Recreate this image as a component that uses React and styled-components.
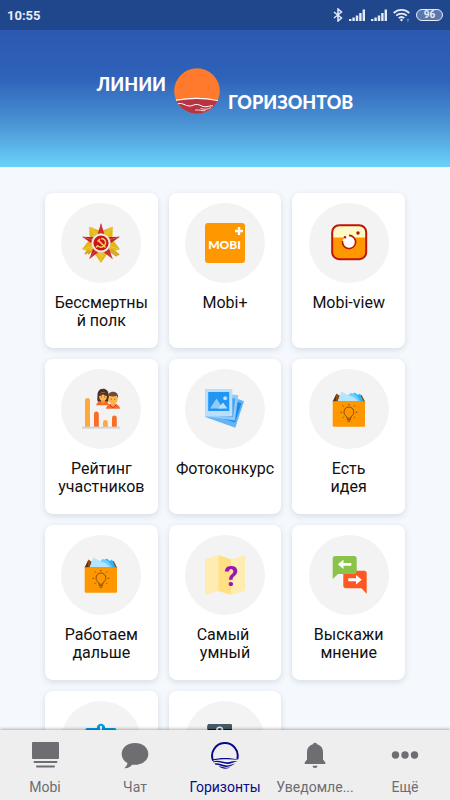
import { useState } from "react";
import styled, { createGlobalStyle } from "styled-components";

const GlobalStyle = createGlobalStyle`
  * {
    box-sizing: border-box;
  }
  body {
    margin: 0;
    font-family: Roboto, "Noto Sans", sans-serif;
    background: #f5f9fd;
  }
  button {
    font: inherit;
    border: 0;
    padding: 0;
    cursor: pointer;
  }
`;

const Screen = styled.div`
  display: flex;
  flex-direction: column;
  height: 100vh;
`;

const StatusBar = styled.div`
  display: flex;
  align-items: center;
  justify-content: space-between;
  flex-shrink: 0;
  height: 30px;
  padding: 0 7px;
  background: #20468b;
  color: #e6ecf7;
`;

const Clock = styled.time`
  font-size: 13px;
  font-weight: 700;
`;

const StatusIcons = styled.div`
  display: flex;
  align-items: center;
  gap: 6px;

  svg {
    display: block;
  }
`;

const Battery = styled.span`
  width: 27px;
  height: 12px;
  border: 1px solid #e6ecf7;
  border-radius: 6px;
  background: #5b78ac;
  font-size: 10px;
  font-weight: 700;
  line-height: 10px;
  text-align: center;
`;

const Header = styled.header`
  display: flex;
  justify-content: center;
  flex-shrink: 0;
  height: 137px;
  padding-top: 38px;
  background: linear-gradient(#2c58b0, #2f62b9 35%, #4a93d4 68%, #6ad2fa);
`;

const Logo = styled.h1`
  display: flex;
  gap: 8px;
  height: 46px;
  margin: 0;
  color: #fff;
  font-family: Lato, Inter, sans-serif;
  font-size: 18px;
  font-weight: 900;
`;

const LogoWord = styled.span`
  align-self: ${(props) => (props.$low ? "flex-end" : "flex-start")};
  line-height: ${(props) => (props.$low ? "24px" : "32px")};
`;

const Content = styled.main`
  flex: 1;
  min-height: 0;
  overflow: hidden;
  padding: 26px 10% 0;
`;

const Grid = styled.div`
  display: grid;
  grid-template-columns: repeat(3, 1fr);
  grid-auto-rows: 155px;
  gap: 11px;
`;

const Card = styled.button`
  display: flex;
  flex-direction: column;
  align-items: center;
  gap: 11px;
  min-width: 0;
  && {
    padding: 10px 6px;
  }
  border-radius: 8px;
  background: #fff;
  color: #111;
  box-shadow: 0 2px 6px rgba(50, 70, 110, 0.16);
`;

const IconCircle = styled.span`
  display: flex;
  align-items: center;
  justify-content: center;
  flex-shrink: 0;
  width: 80px;
  height: 80px;
  border-radius: 50%;
  background: #f3f3f3;
`;

const CardTitle = styled.span`
  width: 100%;
  font-size: 16px;
  line-height: 18px;
  text-align: center;
  white-space: pre-line;
  word-break: break-all;
`;

const TabBar = styled.nav`
  position: relative;
  display: flex;
  flex-shrink: 0;
  height: 70px;
  background: #eee;
  box-shadow: 0 -1px 3px rgba(0, 0, 0, 0.3);
`;

const Tab = styled.button`
  display: flex;
  flex: 1;
  flex-direction: column;
  align-items: center;
  gap: 10px;
  min-width: 0;
  && {
    padding-top: 11px;
  }
  background: none;
  color: ${(props) => (props.$active ? "#0a0a8c" : "#6d6d72")};
  font-size: 14px;
  line-height: 16px;
  white-space: nowrap;
`;

const starPoints = (outer, inner, turn) =>
  Array.from({ length: 10 }, (_, i) => {
    const r = i % 2 ? inner : outer;
    const a = ((i * 36 + turn - 90) * Math.PI) / 180;
    return `${(20 + r * Math.cos(a)).toFixed(1)},${(20 + r * Math.sin(a)).toFixed(1)}`;
  }).join(" ");

const Art = ({ children }) => (
  <svg width="40" height="40" viewBox="0 0 40 40" overflow="visible" aria-hidden="true">
    {children}
  </svg>
);

const OrderIcon = () => (
  <Art>
    <polygon points={starPoints(20, 12, 36)} fill="#e3b71c" />
    <path
      d="M9 5L16 15M31 5L24 15M11 4L17 14M29 4L23 14M20 38V28M18 34L19 28M22 34L21 28M3 26L12 23M37 26L28 23M4 28L12 25M36 28L28 25"
      stroke="#f0d040"
      strokeWidth=".8"
    />
    <path d="M8 27L4 31M10 28L7 31M30 26L38 32M29 28L36 33" stroke="#d8a21e" strokeWidth="2" />
    <polygon points={starPoints(20, 7, 0)} fill="#c62128" />
    <path d="M20 1V12M2 14L12 17M38 14L28 17M9 35L15 27M31 35L25 27" stroke="#e0555a" strokeWidth=".8" />
    <circle cx="20" cy="20" r="9.5" fill="#f4eee2" stroke="#cfc7b8" strokeWidth=".5" />
    <circle cx="20" cy="20" r="7.6" fill="#c9141c" />
    <path d="M20 15.5C25 15.5 26 21 22.5 23.4C20.5 24.7 18 24 16.5 22.8L15 24.5" fill="none" stroke="#f3cf58" strokeWidth="1.4" />
    <path d="M16.5 18.5L19 16M17.6 17.6L24.5 24.5" stroke="#f3cf58" strokeWidth="1.5" />
  </Art>
);

const MobiPlusIcon = () => (
  <Art>
    <rect width="40" height="40" rx="3" fill="#ff9800" />
    <text x="19.5" y="25.5" textAnchor="middle" fill="#fff" fontFamily="Lato, Inter, sans-serif" fontSize="12" fontWeight="900">
      MOBI
    </text>
    <path d="M34 4V12M30 8H38" stroke="#fff" strokeWidth="2.4" />
  </Art>
);

const CameraIcon = () => (
  <Art>
    <rect x="3.2" y="2.2" width="34" height="34" rx="7" fill="#ff9800" />
    <path d="M3.2 14.5V9.2A7 7 0 0 1 10.2 2.2H30.2A7 7 0 0 1 37.2 9.2V14.5Z" fill="#fff9c4" />
    <rect x="3.2" y="2.2" width="34" height="34" rx="7" fill="none" stroke="#bf1408" strokeWidth="2" />
    <circle cx="20" cy="19" r="6.2" fill="#fff" />
    <path d="M20 12.4A6.6 6.6 0 1 1 13.5 18" fill="none" stroke="#bf1408" strokeWidth="1.6" />
    <circle cx="16" cy="14.2" r="1.2" fill="#bf1408" />
    <circle cx="29" cy="10" r="1.7" fill="#a3150c" />
  </Art>
);

const RatingIcon = () => (
  <Art>
    <path d="M4 38V11.5a2.5 2.5 0 0 1 5 0V38Z" fill="#ffa93a" />
    <path d="M13 38V25a2.4 2.4 0 0 1 4.8 0V38Z" fill="#f96d25" />
    <path d="M22 38V33.4a2.4 2.4 0 0 1 4.8 0V38Z" fill="#ffa93a" />
    <path d="M31 38V29a2.4 2.4 0 0 1 4.8 0V38Z" fill="#f96d25" />
    <rect x="1" y="37.6" width="38" height="2" fill="#cfd4d8" />
    <path d="M22 -.3C18 -.3 16.3 3 16.5 7C16.5 9 15.8 10.5 17 12.7H27C28.5 10 27.7 8 27.7 6C27.5 2 25.5 -.3 22 -.3Z" fill="#4b302a" />
    <path d="M15.3 16.3C15.3 13.5 18 12.2 22 12.2S28 13.5 28 16.3Z" fill="#fb6726" />
    <path d="M20 10H24V13L22 15L20 13Z" fill="#e89632" />
    <ellipse cx="22" cy="7.5" rx="3.8" ry="4.3" fill="#ffb74d" />
    <path d="M18 7C18 4.5 20 3 23 3.5C25 3.5 26 5 26 7C24 6.8 22.7 5.7 22 4.9C21 6.3 19.5 7 18 7Z" fill="#4b302a" />
    <path d="M20.2 8H21M23.2 8H24" stroke="#784719" />
    <path d="M25 19.8C25.3 16.7 28 15 32 15S38.8 16.7 39 19.8Z" fill="#fb6726" />
    <path d="M28.5 15.5L32 18.5L35.5 15.5" fill="#ffb74d" stroke="#c62828" strokeWidth="1" />
    <ellipse cx="32" cy="10.2" rx="4.6" ry="5.2" fill="#ffb74d" />
    <path d="M27 9.5C26.3 5 28.5 2.7 32 2.7S37.7 5 37 9.5L35.6 6.8C33 7.7 30 7.5 28.6 6.8Z" fill="#6d4c3b" />
    <path d="M29.8 10.2H30.7M33.3 10.2H34.2" stroke="#784719" />
  </Art>
);

const PhotosIcon = () => (
  <Art>
    <path d="M33 10L39 12.3L30.3 38.8L.3 28V20Z" fill="#64b5f6" />
    <path d="M33.5 13L36.5 14.2L30 33.5L16 29Z" fill="#1e88e5" />
    <path d="M27 5.5L33.3 6.3L30 31.5L.3 27.5V20Z" fill="#90caf9" />
    <path d="M27 9L30.3 9.4L28 28L14 27Z" fill="#42a5f5" />
    <path d="M0 0H27.3V27.3H0Z" fill="#bbdefb" />
    <rect x="3.2" y="3" width="21" height="19" fill="#2196f3" />
    <path d="M5 19.5L11.5 9.5L18 19.5Z" fill="#90caf9" />
    <path d="M13 19.5L18 13.5L22.5 19.5Z" fill="#bbdefb" />
    <circle cx="20.2" cy="9.2" r="2" fill="#bbdefb" />
  </Art>
);

const IdeaBoxIcon = () => (
  <Art>
    <path d="M3.7 13L7.5 4.5L11 7L8.5 13Z" fill="#8d4a12" />
    <path d="M36.3 13L32.7 6L28 7V13Z" fill="#8d4a12" />
    <path d="M3.7 12.5L7 6V12.5Z" fill="#5d3213" />
    <path d="M22 7L25.5 3.5L29 6L31 4.5L34.5 13H22Z" fill="#29b6f6" />
    <path d="M17 8L22 3.8L27 6L32 13H18Z" fill="#6fcffa" />
    <path d="M8.5 13L12.3 2.5L20 6.5L24.5 8L30 13Z" fill="#b3e5fc" />
    <rect x="3.7" y="12.5" width="32.3" height="25.3" rx="1" fill="#ff9800" />
    <path d="M3.7 12.5H36" stroke="#e58a0c" strokeWidth=".7" />
    <g fill="none" stroke="#854b0b" strokeWidth="1">
      <path d="M17.8 29.2V27.6C16 26.5 15 25 15 22.9A4.9 4.9 0 0 1 24.8 22.9C24.8 25 23.8 26.5 22 27.6V29.2Z" />
      <path d="M17.8 30.7H22M18.5 32.2H21.3M19.9 14.8V16.5M13.2 23.3H11.5M28.3 23.3H26.6M14.8 17.6L13.6 16.4M25 17.6L26.2 16.4M14.8 27.7L13.6 28.9M25 27.7L26.2 28.9" />
    </g>
  </Art>
);

const QuizMapIcon = () => (
  <Art>
    <path d="M0 4L13.3 0V36L0 40Z" fill="#ffecb3" />
    <path d="M13.3 0L26.4 4.2V40L13.3 36Z" fill="#ffe082" />
    <path d="M26.4 4.2L40 0V35.8L26.4 40Z" fill="#ffecb3" />
    <text x="26.3" y="31" textAnchor="middle" fill="#9c15b0" fontFamily="Roboto, sans-serif" fontSize="28" fontWeight="700">
      ?
    </text>
  </Art>
);

const OpinionIcon = () => (
  <Art>
    <path d="M17 15.7H35A2.7 2.7 0 0 1 37.7 18.4V38.7L32.3 33.3H17A2.7 2.7 0 0 1 14.3 30.6V18.4A2.7 2.7 0 0 1 17 15.7Z" fill="#ff5722" />
    <path d="M6.4 1H25A2.7 2.7 0 0 1 27.7 3.7V16.3A2.7 2.7 0 0 1 25 19H9L3.7 24V3.7A2.7 2.7 0 0 1 6.4 1Z" fill="#8bc34a" />
    <path d="M8.7 9.3L14.5 4.8V8H22.3V10.8H14.5V14Z" fill="#fff" />
    <path d="M32.7 24.8L27 20V23.2H19.3V26.2H27V29.5Z" fill="#fff" />
  </Art>
);

const BadgeIcon = () => (
  <Art>
    <rect x="4.3" y="7" width="31" height="30" rx="2" fill="#039be5" />
    <circle cx="20" cy="7" r="4.2" fill="#039be5" />
    <path d="M20 5V9" stroke="#e1f5fe" strokeWidth="2" />
  </Art>
);

const ClipboardIcon = () => (
  <Art>
    <rect x="2.5" y="3" width="24.5" height="34" rx="2" fill="#101820" />
    <path d="M2.5 8V5A2 2 0 0 1 4.5 3H25A2 2 0 0 1 27 5V8Z" fill="#455a64" />
    <circle cx="14.7" cy="9" r="2.8" fill="#37474f" stroke="#eceff1" strokeWidth="1.6" />
  </Art>
);

const TabIcon = ({ children }) => (
  <svg width="30" height="28" viewBox="0 0 30 28" fill="currentColor" aria-hidden="true">
    {children}
  </svg>
);

const cards = [
  { title: "Бессмертный полк", Icon: OrderIcon },
  { title: "Mobi+", Icon: MobiPlusIcon },
  { title: "Mobi-view", Icon: CameraIcon },
  { title: "Рейтинг\nучастников", Icon: RatingIcon },
  { title: "Фотоконкурс", Icon: PhotosIcon },
  { title: "Есть\nидея", Icon: IdeaBoxIcon },
  { title: "Работаем\nдальше", Icon: IdeaBoxIcon },
  { title: "Самый\u00a0\nумный", Icon: QuizMapIcon },
  { title: "Выскажи\nмнение", Icon: OpinionIcon },
  { title: "", Icon: BadgeIcon },
  { title: "", Icon: ClipboardIcon },
];

const tabs = [
  {
    label: "Mobi",
    icon: (
      <>
        <rect x="2" y="1" width="27" height="17" rx="1" />
        <rect x="3.5" y="20" width="24" height="2" rx="1" />
        <rect x="6" y="24.5" width="19" height="2" rx="1" />
      </>
    ),
  },
  {
    label: "Чат",
    icon: <path d="M15 2C7.5 2 1.7 6.5 1.7 13C1.7 17 3.8 20.3 7.5 22C7.2 24 6.2 25.5 4.2 27.2C8 27.3 10.5 26 12 23.7C21 24.8 28.3 20 28.3 13C28.3 6.5 22.5 2 15 2Z" />,
  },
  {
    label: "Горизонты",
    icon: (
      <>
        <path d="M3 19.5A12.8 12.8 0 1 1 27.3 18" fill="none" stroke="currentColor" strokeWidth="2" />
        <path d="M2 18.7C9 16.7 20 16.3 29 19C20 17.9 10 18 2 19.8Z" />
        <path d="M3 20.5C9 18.5 13 21.5 18 21.2C21 21 23 19.3 27.5 20.2C24 20.5 22 22.8 18 22.9C13 23 9 20 3 21.5Z" />
        <path d="M4.5 22.5C9 21.7 12 24.5 17 24.6C20 24.6 22 23 25.5 22.6C22.5 24 20.5 26 16 25.9C11.5 25.8 9 23.4 5.5 23.7Z" />
        <path d="M8.5 25.3C12 25.5 15 27.5 20.5 26.3C17 28.4 12 28 8.5 25.3Z" />
      </>
    ),
  },
  {
    label: "Уведомле...",
    icon: (
      <>
        <path d="M13 3.3A2.1 2.1 0 0 1 17 3.3C21 4.3 23 7.5 23 11.5V18.5L25.3 21.5V23H4.7V21.5L7 18.5V11.5C7 7.5 9 4.3 13 3.3Z" />
        <path d="M12.5 24.7H17.5A2.5 2.2 0 0 1 12.5 24.7Z" />
      </>
    ),
  },
  {
    label: "Ещё",
    icon: (
      <>
        <circle cx="5.5" cy="14" r="3.7" />
        <circle cx="15" cy="14" r="3.7" />
        <circle cx="24.5" cy="14" r="3.7" />
      </>
    ),
  },
];

const SignalIcon = () => (
  <svg width="16" height="14" viewBox="0 0 16 14" fill="#e6ecf7">
    <path d="M0 11h2.4v2H0zM3.4 9.5h2.4V13H3.4zM6.8 7.5h2.4V13H6.8zM10.2 5h2.4v8h-2.4zM13.6 1.5H16V13h-2.4z" />
  </svg>
);

const App = () => {
  const [active, setActive] = useState("Горизонты");

  return (
    <>
      <GlobalStyle />
      <Screen>
        <StatusBar>
          <Clock>10:55</Clock>
          <StatusIcons>
            <svg width="10" height="14" viewBox="0 0 10 14" fill="none" stroke="#e6ecf7" strokeWidth="1.5">
              <path d="M1 4L8.5 10L5 13V1L8.5 4L1 10" />
            </svg>
            <SignalIcon />
            <SignalIcon />
            <svg width="17" height="14" viewBox="0 0 17 14" fill="none" stroke="#e6ecf7" strokeWidth="1.8">
              <path d="M.7 5C5 .7 12 .7 16.3 5M3.2 7.7C6.2 4.8 10.8 4.8 13.8 7.7M5.7 10.2C7.4 8.7 9.6 8.7 11.3 10.2" />
              <circle cx="8.5" cy="12" r="1.2" fill="#e6ecf7" stroke="none" />
              <path d="M14 11.5H16M14 13H15.5" strokeWidth="1" opacity=".5" />
            </svg>
            <Battery>96</Battery>
          </StatusIcons>
        </StatusBar>

        <Header>
          <Logo>
            <LogoWord>ЛИНИИ</LogoWord>
            <svg width="46" height="46" viewBox="0 0 46 46" aria-hidden="true">
              <circle cx="23" cy="23" r="22.8" fill="#ff7a2d" />
              <path d="M2.2 32.2C15 30 31 30 43.8 32.2A22.8 22.8 0 0 1 2.2 32.2Z" fill="#b93443" />
              <g fill="none" stroke="#fff" strokeLinecap="round">
                <path d="M2.5 32.2C15 30 31 30 43.5 32.5" strokeWidth="1.2" />
                <path d="M4.5 35.5C9 34.5 11 38 15.5 38C19 38 20 36 23.5 36.5C27 37 29 39.5 33 38.7C35 38.3 37 37.5 38.5 37.7" strokeWidth="1" />
                <path d="M21.5 42C26 41.5 28 43.2 31 42.7M27 40.5C31 42 34 41.5 37 39.5" strokeWidth=".8" />
              </g>
            </svg>
            <LogoWord $low>ГОРИЗОНТОВ</LogoWord>
          </Logo>
        </Header>

        <Content>
          <Grid>
            {cards.map(({ title, Icon }, i) => (
              <Card key={i} type="button">
                <IconCircle>
                  <Icon />
                </IconCircle>
                <CardTitle>{title}</CardTitle>
              </Card>
            ))}
          </Grid>
        </Content>

        <TabBar>
          {tabs.map(({ label, icon }) => (
            <Tab key={label} type="button" $active={label === active} onClick={() => setActive(label)}>
              <TabIcon>{icon}</TabIcon>
              {label}
            </Tab>
          ))}
        </TabBar>
      </Screen>
    </>
  );
};

export default App;
